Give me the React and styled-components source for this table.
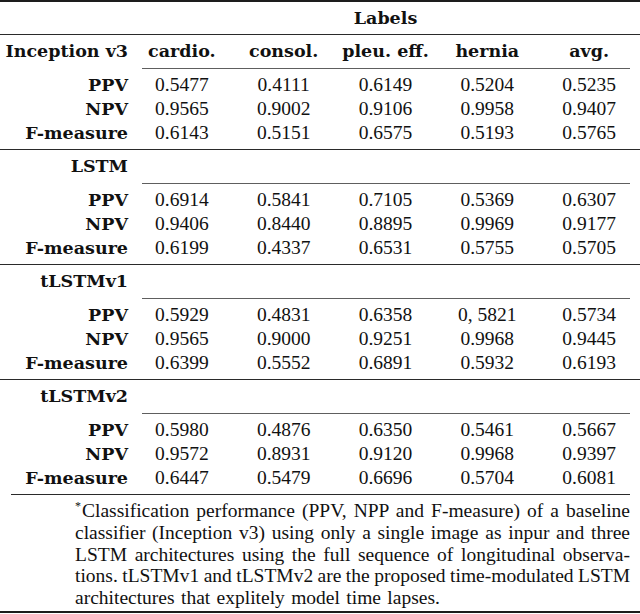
import React from 'react';
import styled, { createGlobalStyle } from 'styled-components';

const GlobalStyle = createGlobalStyle`
  html, body { margin: 0; padding: 0; background: #ffffff; }
  body { width: 640px; overflow: hidden; }
`;

const Page = styled.div`
  width: 640px;
  color: #111;
  font-family: "Liberation Serif", "Times New Roman", serif;
`;

const HeavyRule = styled.div`
  height: 2px;
  background: #1d1d1d;
`;

const MidRule = styled.div`
  height: 1px;
  background: #2a2a2a;
  margin: 0 ${p => p.$right || 0}px 0 ${p => p.$left || 0}px;
`;

const CmidRule = styled.div`
  height: 1px;
  background: #5e5e5e;
  margin: 0 10px 0 142px;
`;

const Row = styled.div`
  display: grid;
  grid-template-columns: 131px repeat(5, 1fr);
  align-items: baseline;
  height: ${p => p.$h}px;
  line-height: ${p => p.$h}px;
`;

const DataBlock = styled.div`
  padding: 4px 0;
`;

const RowLabel = styled.div`
  font-family: "DejaVu Serif", "Liberation Serif", serif;
  font-weight: bold;
  font-size: 17.5px;
  text-align: right;
  padding-right: 3px;
  white-space: nowrap;
`;

const HeadCell = styled.div`
  font-family: "DejaVu Serif", "Liberation Serif", serif;
  font-weight: bold;
  font-size: 17.5px;
  text-align: center;
  white-space: nowrap;
  grid-column: ${p => p.$span || 'auto'};
`;

const NumCell = styled.div`
  font-size: 19.5px;
  text-align: center;
  white-space: nowrap;
`;

const Footnote = styled.div`
  padding: 5px 10px 2px 75px;
  font-size: 19.5px;
`;

const FootLine = styled.div`
  height: 21.8px;
  line-height: 21.8px;
  white-space: nowrap;
  text-align: justify;
  text-align-last: ${p => (p.$last ? 'left' : 'justify')};
  word-spacing: ${p => (p.$last ? '1.5px' : '-1px')};
`;

const Mark = styled.sup`
  font-size: 12px;
  vertical-align: 7px;
  line-height: 0;
  margin-right: 1px;
`;

const columns = ['cardio.', 'consol.', 'pleu. eff.', 'hernia', 'avg.'];

const groups = [
  {
    name: 'Inception v3',
    header: true,
    rows: [
      ['PPV', '0.5477', '0.4111', '0.6149', '0.5204', '0.5235'],
      ['NPV', '0.9565', '0.9002', '0.9106', '0.9958', '0.9407'],
      ['F-measure', '0.6143', '0.5151', '0.6575', '0.5193', '0.5765'],
    ],
  },
  {
    name: 'LSTM',
    rows: [
      ['PPV', '0.6914', '0.5841', '0.7105', '0.5369', '0.6307'],
      ['NPV', '0.9406', '0.8440', '0.8895', '0.9969', '0.9177'],
      ['F-measure', '0.6199', '0.4337', '0.6531', '0.5755', '0.5705'],
    ],
  },
  {
    name: 'tLSTMv1',
    rows: [
      ['PPV', '0.5929', '0.4831', '0.6358', '0, 5821', '0.5734'],
      ['NPV', '0.9565', '0.9000', '0.9251', '0.9968', '0.9445'],
      ['F-measure', '0.6399', '0.5552', '0.6891', '0.5932', '0.6193'],
    ],
  },
  {
    name: 'tLSTMv2',
    rows: [
      ['PPV', '0.5980', '0.4876', '0.6350', '0.5461', '0.5667'],
      ['NPV', '0.9572', '0.8931', '0.9120', '0.9968', '0.9397'],
      ['F-measure', '0.6447', '0.5479', '0.6696', '0.5704', '0.6081'],
    ],
  },
];

const noteLines = [
  'Classification performance (PPV, NPP and F-measure) of a baseline',
  'classifier (Inception v3) using only a single image as inpur and three',
  'LSTM architectures using the full sequence of longitudinal observa-',
  'tions. tLSTMv1 and tLSTMv2 are the proposed time-modulated LSTM',
  'architectures that explitely model time lapses.',
];

function Group({ group }) {
  return (
    <>
      <MidRule />
      <Row $h={33}>
        <RowLabel>{group.name}</RowLabel>
        {group.header && columns.map(c => <HeadCell key={c}>{c}</HeadCell>)}
      </Row>
      <CmidRule />
      <DataBlock>
        {group.rows.map(r => (
          <Row $h={24} key={r[0]}>
            <RowLabel>{r[0]}</RowLabel>
            {r.slice(1).map((v, i) => (
              <NumCell key={i}>{v}</NumCell>
            ))}
          </Row>
        ))}
      </DataBlock>
    </>
  );
}

export default function App() {
  return (
    <Page>
      <GlobalStyle />
      <HeavyRule />
      <Row $h={32}>
        <div />
        <HeadCell $span="2 / 7">Labels</HeadCell>
      </Row>
      {groups.map(g => (
        <Group key={g.name} group={g} />
      ))}
      <MidRule $left={11} $right={10} />
      <Footnote>
        {noteLines.map((t, i) => (
          <FootLine key={i} $last={i === noteLines.length - 1}>
            {i === 0 && <Mark>*</Mark>}
            {t}
          </FootLine>
        ))}
      </Footnote>
      <HeavyRule />
    </Page>
  );
}
